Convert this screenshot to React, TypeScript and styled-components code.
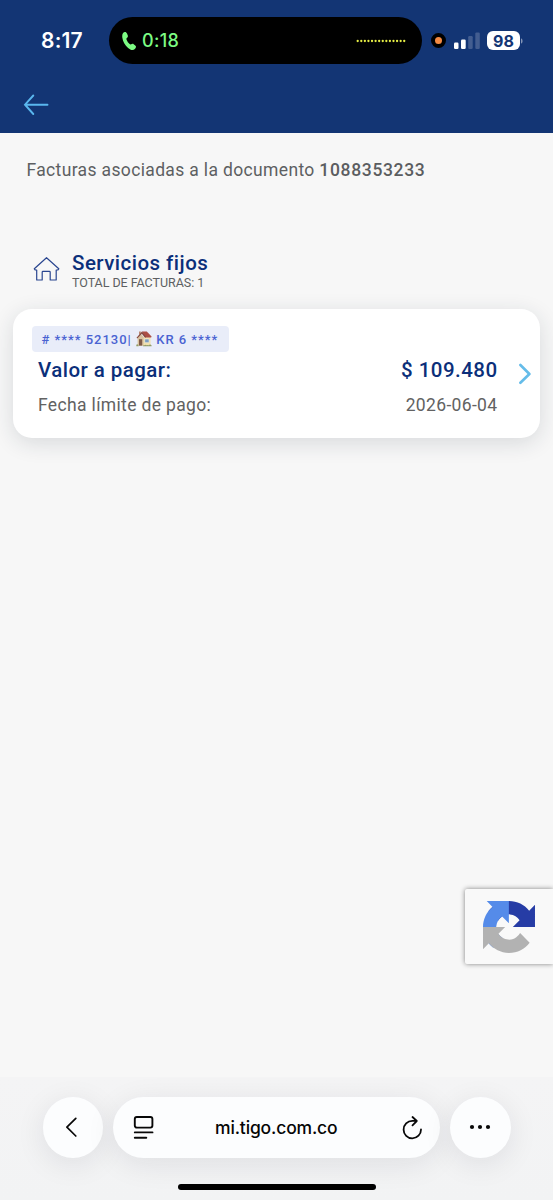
import React from 'react';
import styled, { createGlobalStyle } from 'styled-components';

const GlobalStyle = createGlobalStyle`
  * { box-sizing: border-box; }
  body { margin: 0; background: #f7f7f7; }
  svg { display: block; flex: none; }
  p, h2 { margin: 0; }
`;

const Screen = styled.div`
  position: relative;
  display: flex;
  flex-direction: column;
  width: 553px;
  height: 1200px;
  overflow: hidden;
  background: #f7f7f7;
  font-family: Roboto, 'Liberation Sans', sans-serif;
`;

const Header = styled.header`
  flex: none;
  height: 133px;
  background: #133574;
`;

const StatusBar = styled.div`
  display: flex;
  align-items: center;
  height: 81px;
  font-family: Inter, 'Liberation Sans', sans-serif;
`;

const Clock = styled.div`
  width: 109px;
  padding-left: 41px;
  color: #fff;
  font-size: 21px;
  font-weight: 600;
  letter-spacing: 0.2px;
`;

const Island = styled.div`
  display: flex;
  align-items: center;
  justify-content: space-between;
  width: 313px;
  height: 47px;
  padding: 0 16px 0 13px;
  border-radius: 24px;
  background: #000;
`;

const CallTime = styled.div`
  display: flex;
  align-items: center;
  gap: 6px;
  color: #7cfb83;
  font-size: 18px;
  font-weight: 500;
  letter-spacing: 0.3px;
`;

const MicDot = styled.div`
  width: 15px;
  height: 15px;
  margin: 0 8px 0 9px;
  border: 4px solid #000;
  border-radius: 50%;
  background: #f58a42;
`;

const Battery = styled.div`
  display: flex;
  align-items: center;
  justify-content: center;
  width: 33px;
  height: 19px;
  margin-left: 7px;
  border-radius: 6px;
  background: #fff;
  color: #133574;
  font-size: 16px;
  font-weight: 700;
`;

const NavRow = styled.div`
  display: flex;
  padding: 12px 0 0 23px;
`;

const Main = styled.main`
  flex: 1;
  display: flex;
  flex-direction: column;
  padding: 26px 13px 0;
`;

const Intro = styled.p`
  padding-left: 13.5px;
  color: #5d5f62;
  font-size: 17.5px;
  line-height: 22px;
  letter-spacing: 0.35px;
  white-space: nowrap;
  b { font-weight: 500; color: #5b5d60; letter-spacing: 0.66px; }
`;

const SectionHead = styled.div`
  display: flex;
  gap: 12px;
  margin-top: 69px;
  padding-left: 20px;
  svg { margin-top: 6px; }
`;

const SectionTitle = styled.h2`
  padding-top: 1px;
  color: #0b2f7a;
  font-size: 20.5px;
  font-weight: 500;
  line-height: 25px;
  letter-spacing: 0.47px;
`;

const SectionCount = styled.p`
  color: #5d5f62;
  font-size: 12.5px;
  line-height: 13px;
  letter-spacing: -0.04px;
`;

const Card = styled.section`
  display: flex;
  align-items: center;
  height: 129px;
  margin: 20px 0 0;
  padding: 0 9px 0 19px;
  border-radius: 19px;
  background: #fff;
  box-shadow: 0 5px 22px rgba(30, 40, 60, 0.14);
`;

const CardBody = styled.div`
  flex: 1;
  height: 129px;
  padding-top: 17px;
`;

const Tag = styled.div`
  display: flex;
  align-items: center;
  width: 197px;
  height: 26px;
  padding-left: 9.5px;
  border-radius: 4px;
  background: #e9edf9;
  color: #4a63d2;
  font-size: 13px;
  font-weight: 500;
  letter-spacing: 0.98px;
  white-space: pre;
`;

const Row = styled.div<{ $strong?: boolean }>`
  display: flex;
  justify-content: space-between;
  width: 459.5px;
  margin-top: ${(p) => (p.$strong ? 6 : 10)}px;
  margin-left: 6px;
  color: ${(p) => (p.$strong ? '#0b2f7a' : '#626262')};
  font-size: ${(p) => (p.$strong ? 20.5 : 17.5)}px;
  font-weight: ${(p) => (p.$strong ? 500 : 400)};
  line-height: 25px;
  letter-spacing: ${(p) => (p.$strong ? 0.45 : 0.35)}px;
`;

const Captcha = styled.div`
  position: absolute;
  right: 0;
  top: 889px;
  display: flex;
  align-items: center;
  width: 88px;
  height: 75px;
  padding-left: 18px;
  border-radius: 2px 0 0 2px;
  background: #f9f9f9;
  box-shadow: 0 0 5px #808080;
`;

const BrowserBar = styled.footer`
  flex: none;
  height: 123px;
  padding-top: 20px;
  background: linear-gradient(#f4f4f5, #f2f3f4);
`;

const Controls = styled.div`
  display: flex;
  justify-content: center;
  gap: 10px;
`;

const Pill = styled.div<{ $wide?: boolean }>`
  display: flex;
  align-items: center;
  justify-content: ${(p) => (p.$wide ? 'space-between' : 'center')};
  width: ${(p) => (p.$wide ? 327 : 60.5)}px;
  height: 61px;
  padding: ${(p) => (p.$wide ? '0 17px 1px 19.5px' : '0 0 1px')};
  border-radius: 31px;
  background: #fcfdfe;
  box-shadow: 0 6px 30px rgba(20, 20, 40, 0.09);
  color: #050505;
  font: 500 17.5px Inter, 'Liberation Sans', sans-serif;
  letter-spacing: -0.15px;
  span { margin-left: -3px; }
`;

const HomeIndicator = styled.div`
  width: 198px;
  height: 6px;
  margin: 26px auto 0;
  border-radius: 3px;
  background: #000;
`;

const PhoneIcon = () => (
  <svg width="14" height="20" viewBox="0 0 14 20">
    <path d="M2.1 1.2C3.4.5 4.3 1 5 2.5l.8 2c.4 1.1-.1 1.8-1 2.5-.5.4-.5 1-.2 1.7.7 1.8 1.7 3.2 3 4.4.6.5 1 .6 1.6.2.9-.6 1.7-.7 2.5-.1l1.5 1.2c1.2 1 1 2.1-.1 3.3-1.8 1.9-4.4 1.5-7-.8C3 14 .8 10.400.3 6.400 0 3.700.6 2 2.100 1.200Z" fill="#7cfb83" />
  </svg>
);

const VoiceLevel = () => (
  <svg width="50" height="4" viewBox="0 0 50 4">
    {Array.from({ length: 14 }, (_, i) => (
      <circle key={i} cx={1.7 + i * 3.58} cy="2" r="1.15" fill="#e6ee45" />
    ))}
  </svg>
);

const SignalIcon = () => (
  <svg width="26" height="17" viewBox="0 0 26 17">
    <rect x="0" y="10.5" width="4.5" height="6.5" rx="1.2" fill="#fff" />
    <rect x="7" y="7.5" width="4.7" height="9.5" rx="1.2" fill="#fff" />
    <rect x="14.2" y="4" width="4.5" height="13" rx="1.2" fill="#435d90" />
    <rect x="21.3" y="0.5" width="4.5" height="16.5" rx="1.2" fill="#435d90" />
  </svg>
);

const BatteryCap = () => (
  <svg width="3" height="8" viewBox="0 0 3 8">
    <path d="M1 1.2Q2.6 2 2.6 4T1 6.8Z" fill="#8395b7" />
  </svg>
);

const BackArrow = () => (
  <svg width="26" height="24" viewBox="0 0 26 24" fill="none" stroke="#5ab7ee" strokeWidth="1.9" strokeLinecap="round">
    <path d="M10.300 2.500 2 11.700l8.300 9.300M2.300 11.700H24.500" />
  </svg>
);

const HouseIcon = () => (
  <svg width="27" height="26" viewBox="0 0 27 26" fill="none" stroke="#2a4690" strokeWidth="1.200" strokeLinejoin="round">
    <path d="M13.500 1.700 1.300 12.800l1 1.200H3.700v10h5.500v-7.800q0-.8.800-.8h6.400q.8 0 .8.800V24h6V14h1.600l1-1.200Z" />
  </svg>
);

const HouseEmoji = () => (
  <svg width="16" height="16" viewBox="0 0 16 16">
    <path d="M1.600 7 5 3l3.200 3.400V14.800H1.600Z" fill="#d9c3a0" />
    <path d="M7.600 6.200h6.900v8.600H7.600Z" fill="#f0e0ae" />
    <path d="M3 .6h1.800v3H3Z" fill="#b98874" />
    <path d="M6 .6h4.800L15.600 5.600l-.5.900H9.200Z" fill="#ac4f45" />
    <path d="M6 .4 10 6l-.9.700L5.800 2.800 1.300 7.500l-.8-.7Z" fill="#86483d" />
    <path d="M3 8.200h3.200v6.400H3Z" fill="#7e5a48" />
    <path d="M8.700 8h4.400v3.700H8.700Z" fill="#7b9dc4" stroke="#f8f1d8" strokeWidth=".6" />
    <path d="M.3 15.300v-1.500q1-1 1.900 0l.5 1.500ZM7 15.300q.6-2 1.700-1 1-.9 2 0 1.200-.8 2 0 1.600-1.600 2.900.2V15.300Z" fill="#929c68" />
  </svg>
);

const ChevronRight = () => (
  <svg width="13" height="22" viewBox="0 0 13 22" fill="none" stroke="#65bce9" strokeWidth="2.6" strokeLinecap="round" strokeLinejoin="round">
    <path d="m2.400 2 9 9-9 8.800" />
  </svg>
);

const CaptchaLogo = () => (
  <svg width="52" height="52" viewBox="0 0 64 64">
    <path fill="#263ca5" d="M64 31.955l-.033-1.370V4.687l-7.160 7.160C50.948 4.674 42.033.093 32.050.093c-10.389 0-19.622 4.960-25.458 12.640l11.736 11.860a15.550 15.550 0 0 1 4.754-5.334c2.050-1.600 4.952-2.906 8.968-2.906.485 0 .860.057 1.135.163 4.976.393 9.288 3.140 11.828 7.124l-8.307 8.307L64 31.953" />
    <path fill="#558be9" d="M31.862.094l-1.370.033H4.594l7.160 7.160C4.580 13.147 0 22.060 0 32.046c0 10.388 4.960 19.622 12.640 25.458L24.500 45.768a15.548 15.548 0 0 1-5.334-4.754c-1.600-2.050-2.906-4.952-2.906-8.968 0-.485.057-.860.163-1.135.393-4.976 3.140-9.288 7.124-11.828l8.307 8.307L31.860.095" />
    <path fill="#b2b2b2" d="M.001 32.045l.033 1.370v25.898l7.160-7.160c5.860 7.173 14.774 11.754 24.760 11.754 10.388 0 19.622-4.960 25.458-12.640l-11.736-11.860a15.548 15.548 0 0 1-4.754 5.334c-2.050 1.600-4.952 2.906-8.968 2.906-.485 0-.860-.057-1.135-.163-4.976-.393-9.288-3.140-11.828-7.124l8.307-8.307c-10.522.040-22.400.066-27.295-.005" />
  </svg>
);

const BackChevron = () => (
  <svg width="14" height="22" viewBox="0 0 14 22" fill="none" stroke="#080808" strokeWidth="1.7" strokeLinecap="round" strokeLinejoin="round">
    <path d="M9.800 2.300 .9 11.200 9.800 20" />
  </svg>
);

const PageIcon = () => (
  <svg width="21" height="25" viewBox="0 0 21 25" fill="none" stroke="#080808" strokeWidth="1.9" strokeLinecap="round">
    <rect x="1.800" y="2" width="17.600" height="10.600" rx="2" />
    <path d="M1.800 17.400h17.700M1.800 22.700h11.500" />
  </svg>
);

const ReloadIcon = () => (
  <svg width="21" height="25" viewBox="0 0 21 25" fill="none" stroke="#080808" strokeWidth="1.8" strokeLinecap="round" strokeLinejoin="round">
    <path d="M19 14.500A8.700 8.700 0 1 1 10.300 5.900H14.300M10.500 2l4.300 4-4.300 4.300" />
  </svg>
);

const MoreIcon = () => (
  <svg width="22" height="6" viewBox="0 0 22 6" fill="#080808">
    <circle cx="3" cy="3" r="2.1" />
    <circle cx="11" cy="3" r="2.1" />
    <circle cx="19" cy="3" r="2.1" />
  </svg>
);

export default function App() {
  return (
    <>
      <GlobalStyle />
      <Screen>
        <Header>
          <StatusBar>
            <Clock>8:17</Clock>
            <Island>
              <CallTime>
                <PhoneIcon />
                0:18
              </CallTime>
              <VoiceLevel />
            </Island>
            <MicDot />
            <SignalIcon />
            <Battery>98</Battery>
            <BatteryCap />
          </StatusBar>
          <NavRow>
            <BackArrow />
          </NavRow>
        </Header>
        <Main>
          <Intro>
            Facturas asociadas a la documento <b>1088353233</b>
          </Intro>
          <SectionHead>
            <HouseIcon />
            <div>
              <SectionTitle>Servicios fijos</SectionTitle>
              <SectionCount>TOTAL DE FACTURAS: 1</SectionCount>
            </div>
          </SectionHead>
          <Card>
            <CardBody>
              <Tag>
                <span># **** 52130| </span>
                <HouseEmoji />
                <span> KR 6 ****</span>
              </Tag>
              <Row $strong>
                <span>Valor a pagar:</span>
                <span>$ 109.480</span>
              </Row>
              <Row>
                <span>Fecha límite de pago:</span>
                <span>2026-06-04</span>
              </Row>
            </CardBody>
            <ChevronRight />
          </Card>
        </Main>
        <Captcha>
          <CaptchaLogo />
        </Captcha>
        <BrowserBar>
          <Controls>
            <Pill>
              <BackChevron />
            </Pill>
            <Pill $wide>
              <PageIcon />
              <span>mi.tigo.com.co</span>
              <ReloadIcon />
            </Pill>
            <Pill>
              <MoreIcon />
            </Pill>
          </Controls>
          <HomeIndicator />
        </BrowserBar>
      </Screen>
    </>
  );
}
